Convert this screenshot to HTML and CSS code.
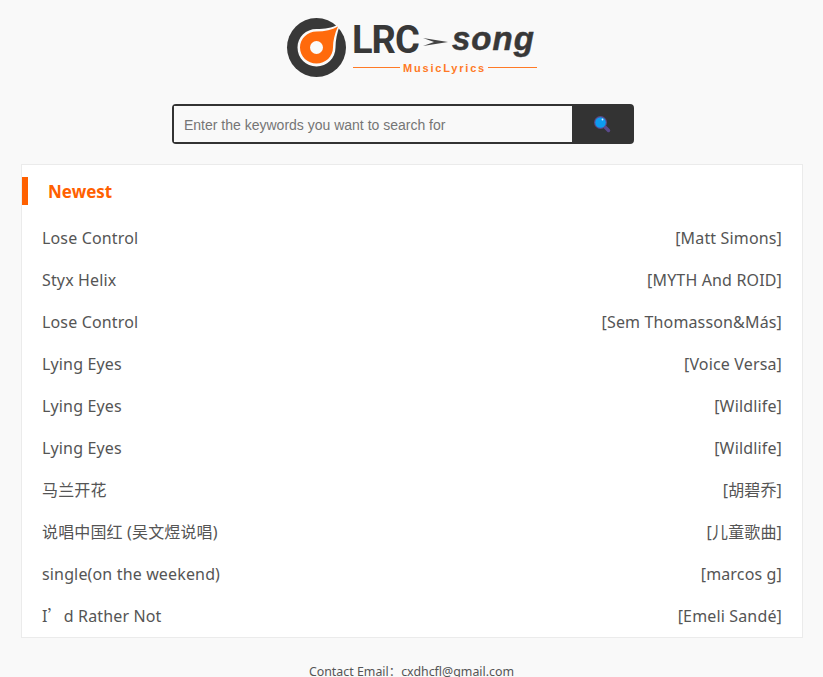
FILE: index.html
```
<!DOCTYPE html>
<html lang="en">
<head>
  <meta charset="UTF-8" />
  <title>LRC song - MusicLyrics</title>
  <link rel="stylesheet" href="styles.css">
</head>
<body>

  <!-- logo -->
  <div class="logo">
    <svg class="logo-svg" width="254" height="64" viewBox="0 0 254 64" role="img" aria-label="LRC song">
      <circle cx="31.500" cy="32.500" r="29.500" fill="#383838"/>
      <path d="M31.500 14 C21 14 12.500 22 12.500 32.500 C12.500 43 21 51.500 31.500 51.500 C42 51.500 50.500 43 50.500 32.500 C50.500 25 52 18 55 10 L53 9.500 C47 13 40 14 31.500 14 Z" fill="#fafafa"/>
      <path d="M31.500 16.500 C22.500 16.500 15 23.500 15 32.500 C15 41.500 22.500 48.500 31.500 48.500 C40.500 48.500 48 41.500 48 32.500 C48 26 49.500 19 53 11.500 C47 15 40 16.500 31.500 16.500 Z" fill="#ff6a0c"/>
      <circle cx="31.500" cy="32.500" r="6.500" fill="#fafafa"/>
      <text class="logo-lrc" x="67" y="37.500">LRC</text>
      <path d="M138 23 L163 27 L138 31 L149 27 Z" fill="#444"/>
      <text class="logo-song" x="167" y="35">song</text>
      <rect x="68" y="52" width="47" height="1" fill="#ff7a26"/>
      <rect x="203" y="52" width="49" height="1" fill="#ff7a26"/>
      <text class="logo-sub" x="118" y="56.500">MusicLyrics</text>
    </svg>
  </div>

  <!-- buscador -->
  <form class="search">
    <input class="search-input" type="text" placeholder="Enter the keywords you want to search for" />
    <button class="search-btn" type="button" aria-label="Search">
      <svg width="18" height="18" viewBox="0 0 18 18">
        <path d="M10.500 10.500 L15.500 15.500" stroke="#5a4a8c" stroke-width="3.500" stroke-linecap="round"/>
        <circle cx="7.500" cy="7.500" r="6.500" fill="#5a4a8c"/>
        <circle cx="7.500" cy="7.500" r="5.300" fill="#0d9cf0"/>
        <circle cx="9.500" cy="4.500" r="0.900" fill="#d8f0ff"/>
      </svg>
    </button>
  </form>

  <!-- lista -->
  <section class="panel">
    <h2 class="panel-title">Newest</h2>
    <ul class="song-list">
      <li><a>Lose Control</a><span>[Matt Simons]</span></li>
      <li><a>Styx Helix</a><span>[MYTH And ROID]</span></li>
      <li><a>Lose Control</a><span>[Sem Thomasson&amp;Más]</span></li>
      <li><a>Lying Eyes</a><span>[Voice Versa]</span></li>
      <li><a>Lying Eyes</a><span>[Wildlife]</span></li>
      <li><a>Lying Eyes</a><span>[Wildlife]</span></li>
      <li><a>马兰开花</a><span>[胡碧乔]</span></li>
      <li><a>说唱中国红 (吴文煜说唱)</a><span>[儿童歌曲]</span></li>
      <li><a>single(on the weekend)</a><span>[marcos g]</span></li>
      <li><a>I<span class="cjk">’</span>d Rather Not</a><span>[Emeli Sandé]</span></li>
    </ul>
  </section>

  <footer class="footer">Contact Email：cxdhcfl@gmail.com</footer>

</body>
</html>
```

FILE: styles.css
```
body {
  margin: 0;
  background-color: #f9f9f9;
  font-family: "Noto Sans", "Noto Sans CJK SC", sans-serif;
  color: #555;
  height: 677px;
  overflow: hidden;
}

.logo {
  padding-top: 15px;
  margin-left: 285px;
}
.logo-svg {
  display: block;
}
.logo-lrc {
  font-family: "Roboto", sans-serif;
  font-weight: 700;
  font-size: 38px;
  fill: #383838;
  letter-spacing: -1px;
}
.logo-song {
  font-family: "Liberation Sans", sans-serif;
  font-weight: bold;
  font-style: italic;
  font-size: 33px;
  fill: #383838;
  letter-spacing: 1px;
  stroke: #383838;
  stroke-width: 0.500px;
}
.logo-sub {
  font-family: "Liberation Sans", sans-serif;
  font-weight: bold;
  font-size: 11px;
  letter-spacing: 1.800px;
  fill: #ff7a26;
}

.search {
  display: flex;
  width: 462px;
  height: 40px;
  margin: 25px 0 20px 172px;
  box-sizing: border-box;
  background: #333;
  border: 2px solid #333;
  border-radius: 4px;
}
.search-input {
  flex: 1;
  min-width: 0;
  border: 0;
  outline: 0;
  padding: 2px 10px 0;
  background: #f9f9f9;
  font-family: "Liberation Sans", sans-serif;
  font-size: 14px;
  color: #333;
}
.search-input::placeholder {
  color: #757575;
}
.search-btn {
  width: 60px;
  border: 0;
  padding: 0;
  background: #333;
  display: flex;
  align-items: center;
  justify-content: center;
}

.panel {
  margin: 0 20px 0 21px;
  height: 474px;
  box-sizing: border-box;
  background: #fff;
  border: 1px solid #ebebeb;
  padding-top: 12px;
}
.panel-title {
  margin: 0;
  height: 28px;
  line-height: 30px;
  border-left: 6px solid #ff6000;
  padding-left: 20px;
  font-size: 17px;
  font-weight: bold;
  color: #ff6000;
}

.song-list {
  list-style: none;
  margin: 12px 0 0;
  padding: 0 20px;
}
.song-list li {
  display: flex;
  justify-content: space-between;
  height: 42px;
  line-height: 42px;
  font-size: 16px;
  letter-spacing: 0.150px;
  color: #555;
}
.cjk {
  font-family: "Noto Sans CJK SC", sans-serif;
  line-height: 0;
}

.footer {
  margin-top: 25px;
  text-align: center;
  font-size: 12.400px;
  line-height: 18px;
  color: #555;
}
```
